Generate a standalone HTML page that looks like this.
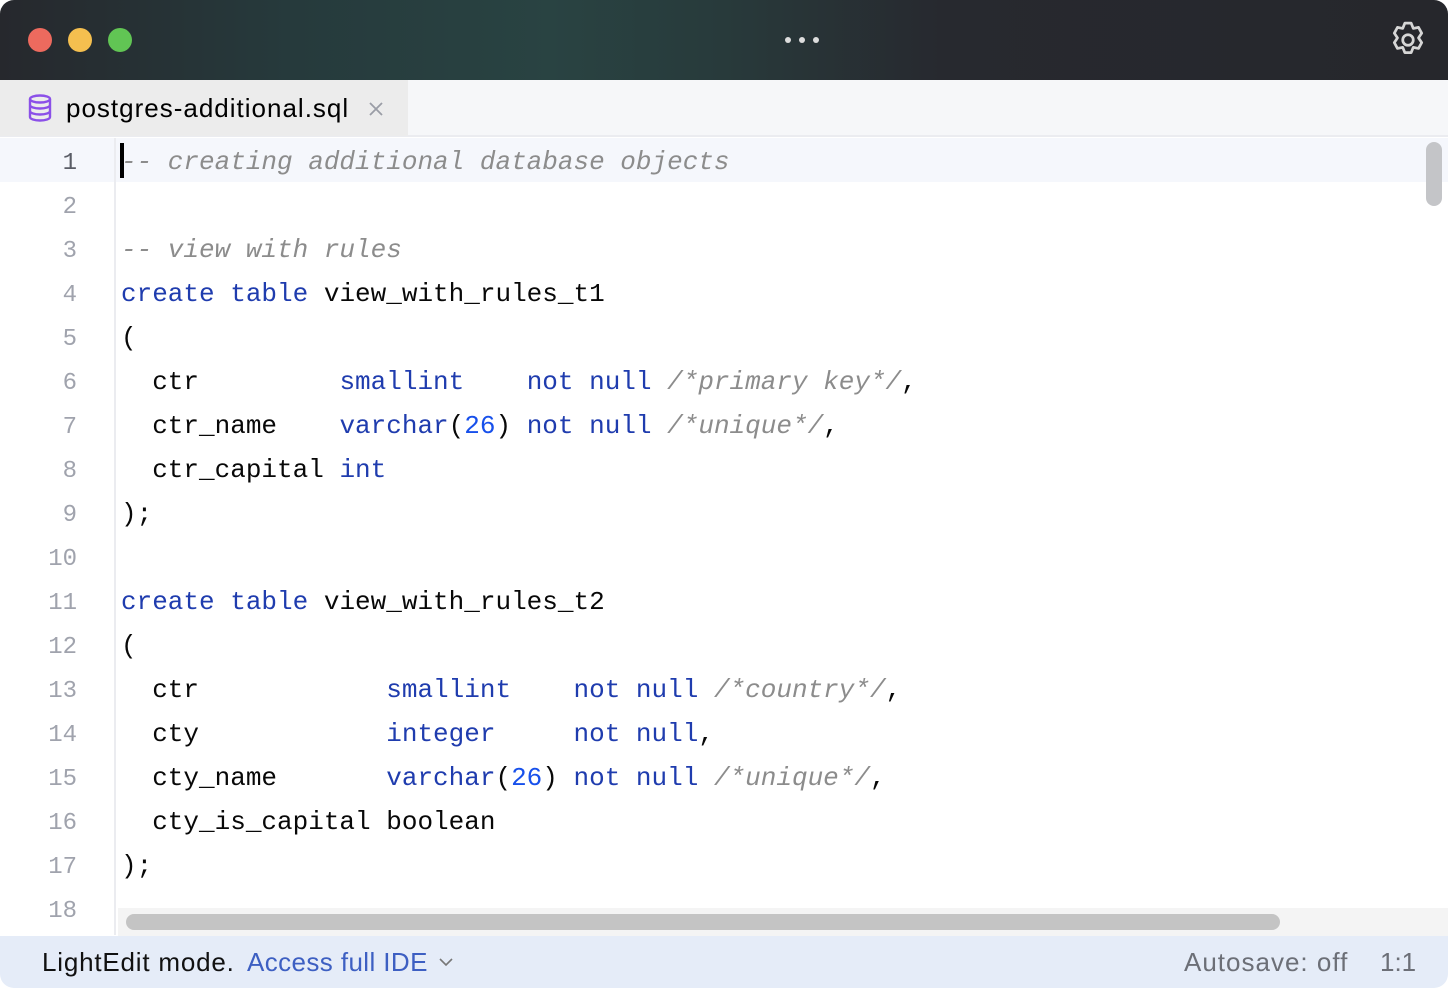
<!DOCTYPE html>
<html><head><meta charset="utf-8"><style>
*{margin:0;padding:0;box-sizing:border-box}
html,body{width:1448px;height:988px;background:#fff;overflow:hidden}
#win{position:absolute;left:0;top:0;width:1448px;height:988px;border-radius:14px;overflow:hidden;background:#fff}
#title{position:absolute;left:0;top:0;width:1448px;height:80px;background:linear-gradient(90deg,#26282d 0%,#263a3c 20%,#294342 38%,#283a3b 50%,#27292f 65%,#26272c 100%)}
.dot{position:absolute;top:28px;width:24px;height:24px;border-radius:50%}
#tabs{position:absolute;left:0;top:80px;width:1448px;height:57px;background:#f6f7f9;border-bottom:2px solid #ebecf0}
#tab{position:absolute;left:0;top:0;width:408px;height:56px;background:#ececec}
#tab span{position:absolute;left:66px;top:13px;font:26px "Liberation Sans",sans-serif;letter-spacing:1px;color:#000}
#editor{position:absolute;left:0;top:138px;width:1448px;height:797px}
.row{position:absolute;left:0;width:1448px;height:44px}
.ln{position:absolute;width:60px;text-align:right;font:24px "Liberation Mono",monospace;color:#a0a3ad;line-height:44px;top:4px}
.code{position:absolute;left:121px;top:2px;font:26px "Liberation Mono",monospace;color:#080808;line-height:44px;white-space:pre}
.k{color:#1f3cae}.c{color:#8c8c8c;font-style:italic}.n{color:#1750eb}
#gl{position:absolute;left:114px;top:138px;width:2px;height:797px;background:#ebecf0}
#status{position:absolute;left:0;top:936px;width:1448px;height:52px;background:#e5ecf8;font:26px "Liberation Sans",sans-serif;line-height:52px}
</style></head><body><div id="win">
<div id="title">
<div class="dot" style="left:28px;background:#ed6a5e"></div>
<div class="dot" style="left:68px;background:#f5bf4f"></div>
<div class="dot" style="left:108px;background:#61c554"></div>
<div style="position:absolute;left:785px;top:37px;width:6px;height:6px;border-radius:50%;background:#ddd"></div>
<div style="position:absolute;left:799px;top:37px;width:6px;height:6px;border-radius:50%;background:#ddd"></div>
<div style="position:absolute;left:813px;top:37px;width:6px;height:6px;border-radius:50%;background:#ddd"></div>
<svg style="position:absolute;left:1388px;top:20px" width="40" height="40" viewBox="0 0 38 38"><path d="M16 3h6l2 5 5-1 3 5.5-3 4.5 3 4.5-3 5.5-5-1-2 5h-6l-2-5-5 1-3-5.5 3-4.5-3-4.5 3-5.5 5 1z" fill="none" stroke="#d6d6d6" stroke-width="2.6" stroke-linejoin="round"/><circle cx="19" cy="19" r="5" fill="none" stroke="#d6d6d6" stroke-width="2.6"/></svg>
</div>
<div id="tabs"><div id="tab">
<svg style="position:absolute;left:27px;top:14px" width="26" height="28" viewBox="0 0 26 28"><g fill="none" stroke="#8b50e8" stroke-width="2.4"><ellipse cx="13" cy="5" rx="10" ry="3.5"/><path d="M3 5v18c0 2 4.5 3.5 10 3.5s10-1.5 10-3.5V5M3 11c0 2 4.5 3.5 10 3.5s10-1.5 10-3.5M3 17c0 2 4.5 3.5 10 3.5s10-1.5 10-3.5"/></g></svg>
<span>postgres-additional.sql</span>
<svg style="position:absolute;left:368px;top:21px" width="16" height="16" viewBox="0 0 16 16"><path d="M2 2l12 12M14 2L2 14" stroke="#9a9da6" stroke-width="1.8"/></svg>
</div></div>
<div id="editor">
<div class="row" style="top:0;background:#f5f7fc"></div>
<div style="position:absolute;left:120px;top:5px;width:4px;height:35px;background:#000"></div>
</div>
<div id="gl"></div>
<div id="lines" style="position:absolute;left:0;top:138px">
<div class="row" style="top:0"><div class="ln" style="color:#5a5d66;left:17px">1</div><div class="code c">-- creating additional database objects</div></div>
<div class="row" style="top:44px"><div class="ln" style="left:17px">2</div></div>
<div class="row" style="top:88px"><div class="ln" style="left:17px">3</div><div class="code c">-- view with rules</div></div>
<div class="row" style="top:132px"><div class="ln" style="left:17px">4</div><div class="code"><span class="k">create table</span> view_with_rules_t1</div></div>
<div class="row" style="top:176px"><div class="ln" style="left:17px">5</div><div class="code">(</div></div>
<div class="row" style="top:220px"><div class="ln" style="left:17px">6</div><div class="code">  ctr         <span class="k">smallint</span>    <span class="k">not null</span> <span class="c">/*primary key*/</span>,</div></div>
<div class="row" style="top:264px"><div class="ln" style="left:17px">7</div><div class="code">  ctr_name    <span class="k">varchar</span>(<span class="n">26</span>) <span class="k">not null</span> <span class="c">/*unique*/</span>,</div></div>
<div class="row" style="top:308px"><div class="ln" style="left:17px">8</div><div class="code">  ctr_capital <span class="k">int</span></div></div>
<div class="row" style="top:352px"><div class="ln" style="left:17px">9</div><div class="code">);</div></div>
<div class="row" style="top:396px"><div class="ln" style="left:17px">10</div></div>
<div class="row" style="top:440px"><div class="ln" style="left:17px">11</div><div class="code"><span class="k">create table</span> view_with_rules_t2</div></div>
<div class="row" style="top:484px"><div class="ln" style="left:17px">12</div><div class="code">(</div></div>
<div class="row" style="top:528px"><div class="ln" style="left:17px">13</div><div class="code">  ctr            <span class="k">smallint</span>    <span class="k">not null</span> <span class="c">/*country*/</span>,</div></div>
<div class="row" style="top:572px"><div class="ln" style="left:17px">14</div><div class="code">  cty            <span class="k">integer</span>     <span class="k">not null</span>,</div></div>
<div class="row" style="top:616px"><div class="ln" style="left:17px">15</div><div class="code">  cty_name       <span class="k">varchar</span>(<span class="n">26</span>) <span class="k">not null</span> <span class="c">/*unique*/</span>,</div></div>
<div class="row" style="top:660px"><div class="ln" style="left:17px">16</div><div class="code">  cty_is_capital boolean</div></div>
<div class="row" style="top:704px"><div class="ln" style="left:17px">17</div><div class="code">);</div></div>
<div class="row" style="top:748px"><div class="ln" style="left:17px">18</div></div>
</div>
<div style="position:absolute;left:1426px;top:142px;width:16px;height:64px;border-radius:8px;background:#c4c5c8"></div>
<div style="position:absolute;left:118px;top:908px;width:1330px;height:28px;background:#f4f4f4"></div>
<div style="position:absolute;left:126px;top:914px;width:1154px;height:16px;border-radius:8px;background:#c4c4c4"></div>
<div id="status">
<span style="position:absolute;left:42px;color:#111;letter-spacing:0.8px">LightEdit mode.</span>
<span style="position:absolute;left:247px;color:#3d5fc2;letter-spacing:0.4px">Access full IDE</span>
<svg style="position:absolute;left:438px;top:20px" width="16" height="12" viewBox="0 0 16 12"><path d="M2 3l6 6 6-6" fill="none" stroke="#777" stroke-width="1.6"/></svg>
<span style="position:absolute;left:1184px;color:#6c6f77;letter-spacing:1px">Autosave: off</span>
<span style="position:absolute;left:1380px;color:#6c6f77">1:1</span>
</div>
</div></body></html>
